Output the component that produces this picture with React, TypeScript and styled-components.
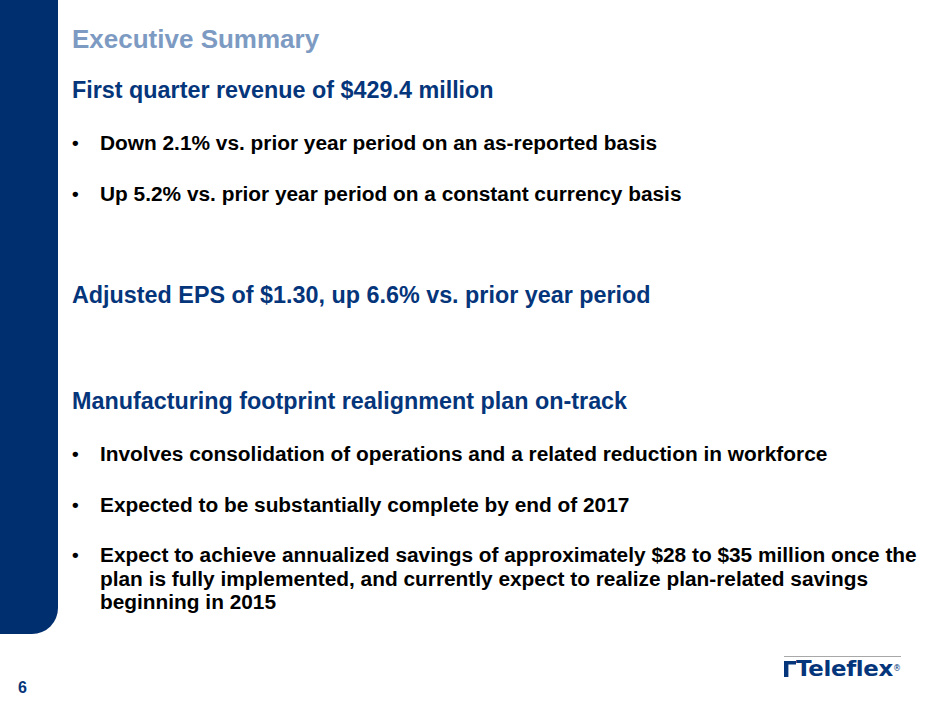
import styled, { createGlobalStyle } from "styled-components";

const GlobalStyle = createGlobalStyle`
  html, body {
    margin: 0;
    padding: 0;
    background: #ffffff;
  }
  body {
    font-family: "Liberation Sans", Arial, Helvetica, sans-serif;
  }
`;

const NAVY = "#05357a";
const SIDEBAR = "#002f6f";

interface Bullet {
  lines: string[];
}

interface Section {
  heading: string;
  space: number;
  bullets: Bullet[];
}

const sections: Section[] = [
  {
    heading: "First quarter revenue of $429.4 million",
    space: 22,
    bullets: [
      { lines: ["Down 2.1% vs. prior year period on an as-reported basis"] },
      { lines: ["Up 5.2% vs. prior year period on a constant currency basis"] },
    ],
  },
  {
    heading: "Adjusted EPS of $1.30, up 6.6% vs. prior year period",
    space: 76,
    bullets: [],
  },
  {
    heading: "Manufacturing footprint realignment plan on-track",
    space: 78,
    bullets: [
      { lines: ["Involves consolidation of operations and a related reduction in workforce"] },
      { lines: ["Expected to be substantially complete by end of 2017"] },
      {
        lines: [
          "Expect to achieve annualized savings of approximately $28 to $35 million once the",
          "plan is fully implemented, and currently expect to realize plan-related savings",
          "beginning in 2015",
        ],
      },
    ],
  },
];

const App = () => {
  return (
    <>
      <GlobalStyle />
      <Slide>
        <Main>
          <Sidebar />
          <Content>
            <Title>Executive Summary</Title>
            {sections.map((section) => (
              <div key={section.heading}>
                <Heading $space={section.space}>{section.heading}</Heading>
                {section.bullets.length > 0 && (
                  <BulletList>
                    {section.bullets.map((bullet) => (
                      <BulletItem key={bullet.lines[0]}>
                        <Dot>•</Dot>
                        <BulletText>
                          {bullet.lines.map((line, i) => (
                            <span key={line}>
                              {line}
                              {i < bullet.lines.length - 1 && <br />}
                            </span>
                          ))}
                        </BulletText>
                      </BulletItem>
                    ))}
                  </BulletList>
                )}
              </div>
            ))}
          </Content>
        </Main>
        <Footer>
          <PageNumber>6</PageNumber>
          <Logo>
            <LogoMark viewBox="0 0 12 16" aria-hidden="true">
              <path d="M0 0 H12 V3.6 H4.4 V16 H0 Z" fill={NAVY} />
            </LogoMark>
            <LogoWord>Teleflex</LogoWord>
            <LogoReg>®</LogoReg>
          </Logo>
        </Footer>
      </Slide>
    </>
  );
};

const Slide = styled.div`
  width: 940px;
  height: 705px;
  display: grid;
  grid-template-rows: 634px 1fr;
  overflow: hidden;
`;

const Main = styled.div`
  display: flex;
`;

const Sidebar = styled.div`
  width: 58px;
  flex-shrink: 0;
  background: ${SIDEBAR};
  border-bottom-right-radius: 26px;
`;

const Content = styled.div`
  padding: 24px 0 0 14px;
`;

const Title = styled.h1`
  margin: 0;
  font-size: 26px;
  line-height: 30px;
  font-weight: 700;
  color: #7d9bc2;
`;

const Heading = styled.h2<{ $space: number }>`
  margin: ${(p) => p.$space}px 0 0;
  font-size: 23.35px;
  line-height: 28px;
  font-weight: 700;
  color: ${NAVY};
`;

const BulletList = styled.ul`
  list-style: none;
  margin: 27px 0 0;
  padding: 0;
  display: flex;
  flex-direction: column;
  gap: 27px;
`;

const BulletItem = styled.li`
  display: grid;
  grid-template-columns: 28px 1fr;
  font-size: 20.85px;
  line-height: 23.5px;
  font-weight: 700;
  color: #000000;
`;

const Dot = styled.span`
  font-size: 19px;
`;

const BulletText = styled.span`
  white-space: nowrap;
`;

const Footer = styled.div`
  display: flex;
  justify-content: space-between;
  align-items: flex-start;
`;

const PageNumber = styled.div`
  margin: 45px 0 0 18px;
  font-size: 16px;
  line-height: 18px;
  font-weight: 700;
  color: ${NAVY};
`;

const Logo = styled.div`
  margin: 22px 39px 0 0;
  padding: 3px 0 0 0;
  border-top: 1px solid #a8a8a8;
  display: flex;
  align-items: flex-start;
  height: 20px;
`;

const LogoMark = styled.svg`
  width: 12px;
  height: 16px;
  margin-top: 1px;
`;

const LogoWord = styled.span`
  font-family: "DejaVu Sans", Verdana, sans-serif;
  font-weight: 700;
  font-size: 22px;
  line-height: 18px;
  letter-spacing: -0.3px;
  color: ${NAVY};
  display: inline-block;
  transform: scaleX(1.04);
  transform-origin: left;
  margin-right: 3px;
`;

const LogoReg = styled.span`
  font-family: "DejaVu Sans", sans-serif;
  font-size: 8px;
  line-height: 10px;
  color: ${NAVY};
  margin-left: 1px;
  margin-top: 4px;
`;

export default App;
